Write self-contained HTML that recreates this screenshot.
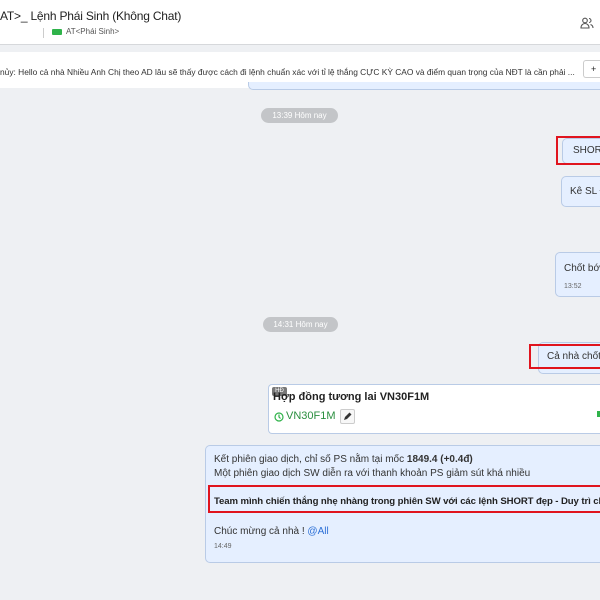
<!DOCTYPE html>
<html><head><meta charset="utf-8"><style>
*{margin:0;padding:0;box-sizing:border-box}
html,body{width:600px;height:600px;overflow:hidden}
body{background:#eef0f3;font-family:"Liberation Sans","DejaVu Sans",sans-serif;position:relative;color:#222}
.wrap{position:absolute;left:0;top:0;width:600px;height:600px;overflow:hidden}
.a{position:absolute}
.hdr{left:0;top:0;width:600px;height:45px;background:#fff;border-bottom:1px solid #d6d8db}
.pin{left:0;top:52px;width:600px;height:36px;background:#fff}
.pill{background:#c3c5c8;color:#fff;font-size:8px;border-radius:8px;text-align:center;line-height:15px;height:15px}
.bub{background:#e5efff;border:1px solid #b9cbe6;border-right:none;border-radius:5px 0 0 5px;font-size:10px;color:#333;white-space:nowrap;overflow:hidden}
.red{border:2px solid #e0141e;border-right:none}
</style></head><body><div class="wrap">
<div class="a hdr">
 <div class="a" style="left:0;top:9px;font-size:12px;letter-spacing:-0.2px;color:#222">AT&gt;_ Lệnh Phái Sinh (Không Chat)</div>
 <div class="a" style="left:43px;top:28px;width:1px;height:10px;background:#ccc"></div>
 <div class="a" style="left:52px;top:29px;width:10px;height:6px;background:#2fb34a;border-radius:1px"></div>
 <div class="a" style="left:66px;top:27px;font-size:8px;color:#555">AT&lt;Phái Sinh&gt;</div>
 <svg class="a" style="left:580px;top:16px" width="14" height="14" viewBox="0 0 14 14" fill="none" stroke="#555" stroke-width="1.1"><circle cx="5" cy="4.5" r="2.3"/><path d="M1 12c0-3 2-4.5 4-4.5s4 1.5 4 4.5z"/><path d="M9 2.5a2 2 0 010 4M10.5 8.5c1.5.5 2.5 1.8 2.5 3.5"/></svg>
</div>
<div class="a pin">
 <div class="a" style="left:0;top:15px;width:580px;font-size:8.4px;color:#333;white-space:nowrap;overflow:hidden">nủy: Hello cả nhà Nhiều Anh Chị theo AD lâu sẽ thấy được cách đi lệnh chuẩn xác với tỉ lệ thắng CỰC KỲ CAO và điểm quan trọng của NĐT là cần phải ...</div>
 <div class="a" style="left:583px;top:8px;width:17px;height:18px;border:1px solid #ccc;border-right:none;border-radius:3px 0 0 3px;font-size:9px;padding-left:7px;line-height:16px">+</div>
</div>
<div class="a" style="left:248px;top:82px;width:352px;height:8px;background:#e5efff;border:1px solid #b9cbe6;border-top:none;border-right:none;border-radius:0 0 0 5px"></div>
<div class="a pill" style="left:261px;top:108px;width:77px">13:39 Hôm nay</div>
<div class="a bub" style="left:562px;top:138px;width:38px;height:26px;padding:6px 0 0 10px">SHORT</div>
<div class="a red" style="left:556px;top:136px;width:44px;height:29px"></div>
<div class="a bub" style="left:561px;top:176px;width:39px;height:31px;padding:9px 0 0 8px">Kê SL Đ</div>
<div class="a bub" style="left:555px;top:252px;width:45px;height:45px;padding:10px 0 0 8px">Chốt bớt<div style="font-size:7px;color:#666;margin-top:9px">13:52</div></div>
<div class="a pill" style="left:263px;top:317px;width:75px">14:31 Hôm nay</div>
<div class="a bub" style="left:538px;top:342px;width:62px;height:32px;padding:8px 0 0 8px">Cả nhà chốt</div>
<div class="a red" style="left:529px;top:344px;width:71px;height:25px"></div>
<div class="a" style="left:268px;top:384px;width:332px;height:50px;background:#fff;border:1px solid #b9cbe6;border-right:none;border-radius:4px 0 0 4px">
 <div class="a" style="left:3px;top:2px;width:15px;height:9px;background:#777;color:#fff;font-size:6px;border-radius:2px;text-align:center;line-height:9px">HĐ</div>
 <div class="a" style="left:4px;top:6px;font-size:11px;font-weight:bold;color:#222">Hợp đồng tương lai VN30F1M</div>
 <svg class="a" style="left:5px;top:27px" width="10" height="10" viewBox="0 0 10 10" fill="none" stroke="#2fb34a" stroke-width="1.2"><circle cx="5" cy="5" r="4"/><path d="M5 2.5V5l1.5 1.5"/></svg>
 <div class="a" style="left:17px;top:25px;font-size:11px;color:#2a8f3f">VN30F1M</div>
 <div class="a" style="left:71px;top:24px;width:15px;height:15px;border:1px solid #ccc;border-radius:2px;background:#f7f7f7"></div>
 <svg class="a" style="left:74px;top:27px" width="9" height="9" viewBox="0 0 9 9"><path d="M1 8l1-3 4.5-4.5 2 2L4 7z" fill="#333"/></svg>
 <div class="a" style="left:328px;top:26px;width:3px;height:6px;background:#2fb34a"></div>
</div>
<div class="a bub" style="left:205px;top:445px;width:395px;height:118px;font-size:10px;line-height:14px;padding:7px 0 0 8px;color:#333">
 <div>Kết phiên giao dịch, chỉ số PS nằm tại mốc <b>1849.4 (+0.4đ)</b></div>
 <div>Một phiên giao dịch SW diễn ra với thanh khoản PS giảm sút khá nhiều</div>
 <div style="margin-top:14px;font-weight:bold;font-size:9.6px;letter-spacing:-0.1px;color:#222">Team mình chiến thắng nhẹ nhàng trong phiên SW với các lệnh SHORT đẹp - Duy trì chiến</div>
 <div style="margin-top:16px">Chúc mừng cả nhà ! <span style="color:#2b6fd6">@All</span></div>
 <div style="font-size:7px;color:#666;margin-top:1px">14:49</div>
</div>
<div class="a red" style="left:208px;top:485px;width:392px;height:28px"></div>
</div></body></html>
